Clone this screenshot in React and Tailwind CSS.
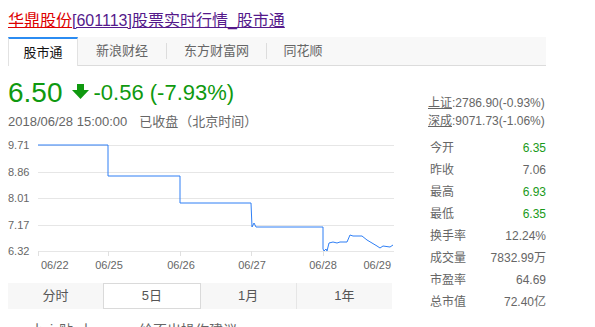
import React from "react";

const font = "font-['Liberation_Sans','Noto_Sans_CJK_SC',sans-serif]";

const tabs = [
  { name: "股市通", w: "w-[70px]" },
  { name: "新浪财经", w: "w-[88px]" },
  { name: "东方财富网", w: "w-[99px]" },
  { name: "同花顺", w: "w-[72px]" },
];

const stats = [
  ["今开", "6.35", true],
  ["昨收", "7.06", false],
  ["最高", "6.93", true],
  ["最低", "6.35", true],
  ["换手率", "12.24%", false],
  ["成交量", "7832.99万", false],
  ["市盈率", "64.69", false],
  ["总市值", "72.40亿", false],
];

const ranges = ["分时", "5日", "1月", "1年"];

const linePts = [
  [38, 145], [108, 145], [108, 176], [180, 176], [180, 203], [251, 203],
  [252, 227], [254, 223], [256, 227], [323, 227], [323, 249], [324, 251],
  [326, 249], [327, 251], [329, 243], [333, 242], [337, 243], [340, 242],
  [347, 242], [350, 235], [353, 236], [362, 236], [367, 240], [377, 246],
  [380, 248], [383, 246], [390, 247], [393, 245],
];

const Chart = () => {
  const grid = [
    ["9.71", 145],
    ["8.86", 172],
    ["8.01", 198],
    ["7.17", 225],
    ["6.32", 251],
  ];
  const ticks = [38, 108, 180, 251, 323, 394];
  return (
    <svg width="386" height="140" viewBox="8 135 386 140" className="block">
      {grid.map(([label, y]) => (
        <g key={label}>
          <line x1="38" x2="394" y1={y + 0.5} y2={y + 0.5} stroke="#e6e6e6" />
          <text x="8" y={y + 4} fontSize="11" fill="#666" fontFamily="Liberation Sans, sans-serif">
            {label}
          </text>
        </g>
      ))}
      {ticks.map((x) => (
        <line key={x} x1={x + 0.5} x2={x + 0.5} y1="251" y2="256" stroke="#e0e0e0" />
      ))}
      <polyline
        points={linePts.map((p) => p.join(",")).join(" ")}
        fill="none"
        stroke="#2f7ff5"
        strokeWidth="1"
      />
      <g fontSize="11" fill="#666" fontFamily="Liberation Sans, sans-serif">
        <text x="41" y="269">06/22</text>
        <text x="109" y="269" textAnchor="middle">06/25</text>
        <text x="181" y="269" textAnchor="middle">06/26</text>
        <text x="252" y="269" textAnchor="middle">06/27</text>
        <text x="323" y="269" textAnchor="middle">06/28</text>
        <text x="391" y="269" textAnchor="end">06/29</text>
      </g>
    </svg>
  );
};

const App = () => {
  return (
    <div className={`w-[595px] h-[327px] overflow-hidden bg-white ${font}`}>
      {/* title */}
      <div className="pt-[11px] pl-[8px] text-[16px] leading-[20px] h-[26px]">
        <a className="text-[#dd0000] underline">华鼎股份</a>
        <a className="text-[#551a8b] underline">[601113]股票实时行情_股市通</a>
      </div>

      {/* source tabs */}
      <div className="ml-[8px] mt-[11px] w-[538px] h-[29px] flex bg-[#f8f8f8] border-b border-[#dcdcdc]">
        {tabs.map((t, i) => (
          <div key={t.name} className="flex items-center">
            {i > 1 && <div className="w-px h-[16px] bg-[#dddddd]" />}
            <div
              className={
                i === 0
                  ? `${t.w} h-[29px] -mb-px bg-white border-t-2 border-[#2b8cf2] border-x border-x-[#e2e2e2] flex items-center justify-center text-[13px] text-[#111]`
                  : `${t.w} h-full flex items-center justify-center text-[13px] text-[#666]`
              }
            >
              {t.name}
            </div>
          </div>
        ))}
      </div>

      <div className="flex">
        {/* left column */}
        <div className="w-[394px] pl-[8px]">
          <div className="flex items-center mt-[11px] h-[32px] text-[#0f990f]">
            <span className="text-[28px] leading-[32px]">6.50</span>
            <svg width="17" height="15" viewBox="0 0 17 15" className="ml-[9px] mr-[5px] -mt-[4px]">
              <rect x="5" y="0" width="7" height="7" fill="#0f990f" />
              <polygon points="0,6 17,6 8.5,15" fill="#0f990f" />
            </svg>
            <span className="text-[22px] leading-[26px]">-0.56 (-7.93%)</span>
          </div>
          <div className="mt-[5px] text-[13px] leading-[16px] text-[#666] flex">
            <span>2018/06/28 15:00:00</span>
            <span className="ml-[12px]">已收盘</span>
            <span className="ml-[1px]">（北京时间）</span>
          </div>
          <div className="mt-[5px]">
            <Chart />
          </div>
          <div className="mt-[8px] w-[384px] h-[26px] flex bg-[#f7f7f7] text-[13px] text-[#555]">
            {ranges.map((r, i) => (
              <div
                key={r}
                className={
                  i === 1
                    ? "flex-1 flex items-center justify-center bg-white border border-[#dadada]"
                    : i === 3
                    ? "flex-1 flex items-center justify-center border-l border-[#e6e6e6]"
                    : "flex-1 flex items-center justify-center"
                }
              >
                {r}
              </div>
            ))}
          </div>
          <div className="mt-[12px] flex text-[14px] leading-[18px] text-[#666]">
            <span className="ml-[22px] tracking-[6px]">小i贴士</span>
            <span className="ml-[40px]">给不出操作建议</span>
          </div>
        </div>

        {/* right column */}
        <div className="ml-[34px] mt-[28px] w-[118px] text-[12px] text-[#666]">
          <div className="leading-[18px] whitespace-nowrap">
            <span className="underline">上证</span>:2786.90(-0.93%)
          </div>
          <div className="leading-[18px] whitespace-nowrap">
            <span className="underline">深成</span>:9071.73(-1.06%)
          </div>
          <div className="mt-[7px]">
            {stats.map(([k, v, up]) => (
              <div key={k} className="flex justify-between h-[22px] items-center pl-[2px]">
                <span>{k}</span>
                <span className={up ? "text-[#1a9a1a]" : ""}>{v}</span>
              </div>
            ))}
          </div>
        </div>
      </div>
    </div>
  );
};

export default App;
